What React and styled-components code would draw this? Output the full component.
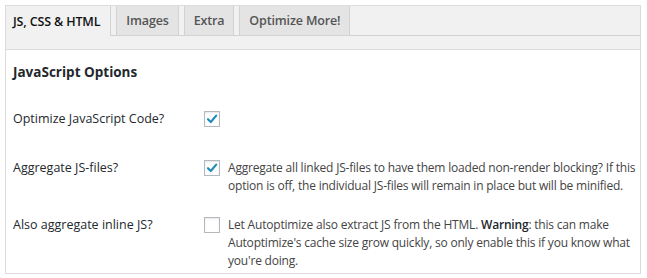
import React from 'react';
import styled, { createGlobalStyle } from 'styled-components';

const GlobalStyle = createGlobalStyle`
  body {
    margin: 0;
    background: #fff;
    font-family: 'Open Sans', 'Noto Sans', sans-serif;
    color: #444;
  }
`;

const Page = styled.div`
  padding: 5px 6px 6px 5px;
`;

const Panel = styled.div`
  border: 1px solid #dcdcdc;
  border-top: none;
  background: #fff;
`;

const TabBar = styled.div`
  display: flex;
  align-items: stretch;
  height: 29px;
  background: #f1f1f1;
  border-top: 1px solid #dcdcdc;
  border-bottom: 1px solid #d2d2d2;
`;

const Tab = styled.div`
  display: flex;
  align-items: center;
  padding: ${({ $active }) => ($active ? '0 10px 0 7px' : '0 9px')};
  margin-left: ${({ $active }) => ($active ? '0' : '5px')};
  margin-bottom: ${({ $active }) => ($active ? '-1px' : '0')};
  font-size: 12.5px;
  font-weight: 600;
  letter-spacing: -0.15px;
  color: ${({ $active }) => ($active ? '#111' : '#555')};
  background: ${({ $active }) => ($active ? '#f1f1f1' : '#e4e4e4')};
  border-left: ${({ $active }) => ($active ? 'none' : '1px solid #d2d2d2')};
  border-right: 1px solid #d2d2d2;
  white-space: nowrap;
`;

const Strip = styled.div`
  height: 13px;
  background: #f1f1f1;
  border-bottom: 1px solid #dcdcdc;
`;

const Content = styled.div`
  padding: 12px 7px 3px 7px;
`;

const Heading = styled.h2`
  margin: 0;
  font-size: 13.5px;
  line-height: 20px;
  font-weight: 700;
  color: #23282d;
`;

const Row = styled.div`
  display: flex;
  align-items: flex-start;
  margin-top: ${({ $top }) => $top}px;
`;

const Label = styled.div`
  width: 191px;
  flex: none;
  font-size: 12.5px;
  line-height: 18px;
  color: #23282d;
`;

const Field = styled.div`
  display: flex;
  align-items: flex-start;
  gap: 8px;
`;

const Box = styled.span`
  flex: none;
  width: 16px;
  height: 16px;
  box-sizing: border-box;
  margin-top: 1px;
  border: 1px solid #b4b9be;
  background: #fff;
  box-shadow: inset 0 1px 2px rgba(0, 0, 0, 0.1);
  display: flex;
  align-items: center;
  justify-content: center;
`;

const Desc = styled.div`
  font-size: 12px;
  letter-spacing: -0.2px;
  line-height: 18.3px;
  color: #444;
  white-space: nowrap;
`;

const Strong = styled.b`
  font-weight: 600;
  color: #23282d;
`;

const Check = ({ on }) => (
  <Box>
    {on && (
      <svg width="12" height="12" viewBox="0 0 12 12">
        <path d="M2 6.2 L4.8 9 L10.2 2.6" fill="none" stroke="#1e8cbe" strokeWidth="2.2" strokeLinecap="round" strokeLinejoin="round" />
      </svg>
    )}
  </Box>
);

const tabs = ['JS, CSS & HTML', 'Images', 'Extra', 'Optimize More!'];

export default function App() {
  return (
    <>
      <GlobalStyle />
      <Page>
        <Panel>
          <TabBar>
            {tabs.map((t, i) => (
              <Tab key={t} $active={i === 0}>{t}</Tab>
            ))}
          </TabBar>
          <Strip />
          <Content>
            <Heading>JavaScript Options</Heading>
            <Row $top={28}>
              <Label>Optimize JavaScript Code?</Label>
              <Field><Check on /></Field>
            </Row>
            <Row $top={31}>
              <Label>Aggregate JS-files?</Label>
              <Field>
                <Check on />
                <Desc>
                  Aggregate all linked JS-files to have them loaded non-render blocking? If this<br />
                  option is off, the individual JS-files will remain in place but will be minified.
                </Desc>
              </Field>
            </Row>
            <Row $top={20}>
              <Label>Also aggregate inline JS?</Label>
              <Field>
                <Check />
                <Desc>
                  Let Autoptimize also extract JS from the HTML. <Strong>Warning</Strong>: this can make<br />
                  Autoptimize's cache size grow quickly, so only enable this if you know what<br />
                  you're doing.
                </Desc>
              </Field>
            </Row>
          </Content>
        </Panel>
      </Page>
    </>
  );
}
